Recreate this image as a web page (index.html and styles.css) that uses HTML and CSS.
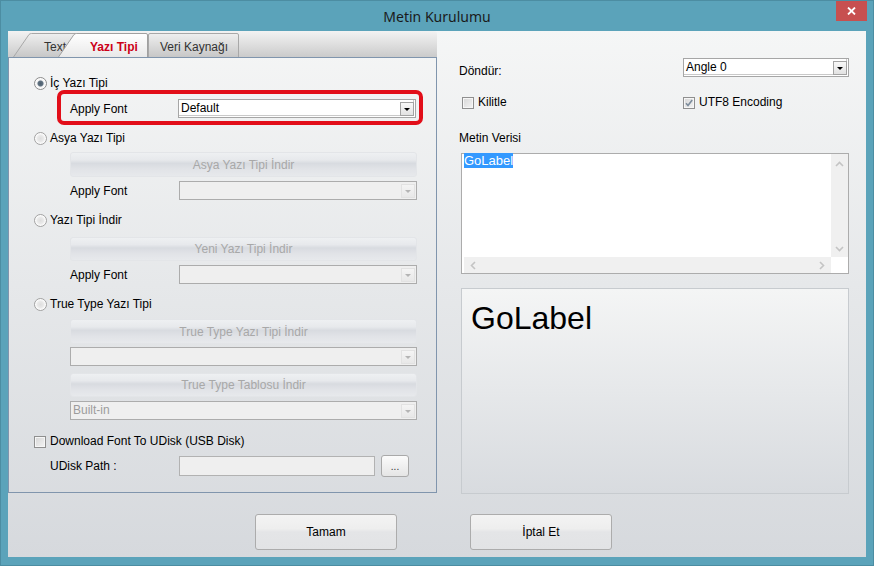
FILE: index.html
```html
<!DOCTYPE html>
<html lang="tr">
<head>
    <meta charset="UTF-8">
    <title>Metin Kurulumu</title>
    <link rel="stylesheet" href="styles.css">
</head>
<body>
    <div class="window">
        <div class="titlebar">
            <span class="title">Metin Kurulumu</span>
            <button class="close">
                <svg width="9" height="8" viewBox="0 0 9 8"><path d="M1 0.5 L8 7.5 M8 0.5 L1 7.5" stroke="#fff" stroke-width="1.8"/></svg>
            </button>
        </div>

        <div class="client">
            <div class="main">
                <!-- sol taraf: sekmeler ve yazı tipi paneli -->
                <div class="left">
                    <div class="tabstrip">
                        <div class="tab tab-text">
                            <svg class="tab-bg" width="64" height="24" viewBox="0 0 64 24">
                                <defs>
                                    <linearGradient id="gGray" x1="0" y1="0" x2="0" y2="1">
                                        <stop offset="0" stop-color="#efefef"/>
                                        <stop offset="1" stop-color="#c7c7c7"/>
                                    </linearGradient>
                                    <linearGradient id="gWhite" x1="0" y1="0" x2="0" y2="1">
                                        <stop offset="0" stop-color="#ffffff"/>
                                        <stop offset="1" stop-color="#e9e9e9"/>
                                    </linearGradient>
                                </defs>
                                <path d="M0.5 24 L16 1.5 Q17 0.5 18.5 0.5 L64 0.5 L64 24" fill="url(#gGray)" stroke="#a8a8a8"/>
                            </svg>
                            <span class="tab-label">Text</span>
                        </div>
                        <div class="tab tab-active">
                            <svg class="tab-bg" width="90" height="24" viewBox="0 0 90 24">
                                <path d="M0.5 24 L16 1.5 Q17 0.5 18.5 0.5 L88 0.5 Q89.5 0.5 89.5 2 L89.5 24" fill="url(#gWhite)" stroke="#a0a0a0"/>
                            </svg>
                            <span class="tab-label">Yazı Tipi</span>
                        </div>
                        <div class="tab tab-data">
                            <svg class="tab-bg" width="91" height="24" viewBox="0 0 91 24">
                                <path d="M0.5 24 L0.5 2 Q0.5 0.5 2 0.5 L89 0.5 Q90.5 0.5 90.5 2 L90.5 24" fill="url(#gGray)" stroke="#a8a8a8"/>
                            </svg>
                            <span class="tab-label">Veri Kaynağı</span>
                        </div>
                    </div>

                    <div class="panel">
                        <div class="radio-row r1"><span class="radio on"></span>İç Yazı Tipi</div>
                        <div class="mark">
                            <div class="field-row">
                                <span class="field-label">Apply Font</span>
                                <div class="select">
                                    <span class="select-text">Default</span>
                                    <span class="drop"></span>
                                </div>
                            </div>
                        </div>

                        <div class="radio-row r2"><span class="radio"></span>Asya Yazı Tipi</div>
                        <div class="dl-btn b1">Asya Yazı Tipi İndir</div>
                        <div class="field-row sub f1">
                            <span class="field-label">Apply Font</span>
                            <div class="select off"><span class="select-text"></span><span class="drop"></span></div>
                        </div>

                        <div class="radio-row r3"><span class="radio"></span>Yazı Tipi İndir</div>
                        <div class="dl-btn b2">Yeni Yazı Tipi İndir</div>
                        <div class="field-row sub f2">
                            <span class="field-label">Apply Font</span>
                            <div class="select off"><span class="select-text"></span><span class="drop"></span></div>
                        </div>

                        <div class="radio-row r4"><span class="radio"></span>True Type Yazı Tipi</div>
                        <div class="dl-btn b3">True Type Yazı Tipi İndir</div>
                        <div class="select off wide s1"><span class="select-text"></span><span class="drop"></span></div>
                        <div class="dl-btn b4">True Type Tablosu İndir</div>
                        <div class="select off wide s2"><span class="select-text">Built-in</span><span class="drop"></span></div>

                        <div class="check-row c1"><span class="check"></span>Download Font To UDisk (USB Disk)</div>
                        <div class="path-row">
                            <span class="path-label">UDisk Path :</span>
                            <div class="path-input"></div>
                            <div class="dots">...</div>
                        </div>
                    </div>
                </div>

                <!-- sağ taraf: döndürme, metin verisi, önizleme -->
                <div class="right">
                    <div class="rot-row">
                        <span class="rot-label">Döndür:</span>
                        <div class="select rot">
                            <span class="select-text">Angle 0</span>
                            <span class="drop"></span>
                        </div>
                    </div>
                    <div class="opt-row">
                        <div class="check-row opt"><span class="check"></span>Kilitle</div>
                        <div class="check-row"><span class="check on">
                            <svg width="10" height="10" viewBox="0 0 10 10"><path d="M2 5.2 L4 7.5 L8.2 2" fill="none" stroke="#7c8c9c" stroke-width="1.6"/></svg>
                        </span>UTF8 Encoding</div>
                    </div>
                    <div class="data-label">Metin Verisi</div>
                    <div class="memo">
                        <div class="memo-text"><span class="sel">GoLabel</span></div>
                        <div class="vscroll">
                            <svg width="9" height="6" viewBox="0 0 9 6"><path d="M1 5 L4.5 1.5 L8 5" fill="none" stroke="#c4c4c4" stroke-width="1.6"/></svg>
                            <svg width="9" height="6" viewBox="0 0 9 6"><path d="M1 1 L4.5 4.5 L8 1" fill="none" stroke="#c4c4c4" stroke-width="1.6"/></svg>
                        </div>
                        <div class="hscroll">
                            <svg width="6" height="9" viewBox="0 0 6 9"><path d="M5 1 L1.5 4.5 L5 8" fill="none" stroke="#c4c4c4" stroke-width="1.6"/></svg>
                            <svg width="6" height="9" viewBox="0 0 6 9"><path d="M1 1 L4.5 4.5 L1 8" fill="none" stroke="#c4c4c4" stroke-width="1.6"/></svg>
                        </div>
                        <div class="corner"></div>
                    </div>
                    <div class="preview">GoLabel</div>
                </div>
            </div>

            <div class="actions">
                <button class="btn">Tamam</button>
                <button class="btn">İptal Et</button>
            </div>
        </div>
    </div>
</body>
</html>
```

FILE: styles.css
```css
* {
    margin: 0;
    padding: 0;
    box-sizing: border-box;
}

body {
    font-family: "Liberation Sans", Arial, sans-serif;
    font-size: 12px;
    color: #000;
    background: #5ba3ba;
}

.window {
    width: 874px;
    height: 566px;
    background: #5ba3ba;
    border: 1px solid #4c8da2;
    padding: 0 7px 8px;
    display: flex;
    flex-direction: column;
}

/* başlık çubuğu */
.titlebar {
    position: relative;
    height: 30px;
    display: flex;
    justify-content: center;
    align-items: center;
}

.title {
    font-family: "Noto Sans", "Open Sans", sans-serif;
    font-size: 14px;
    color: #1a1a1a;
    padding-top: 1px;
}

.close {
    position: absolute;
    top: 0;
    right: -1px;
    width: 31px;
    height: 20px;
    border: none;
    background: #c75050;
    display: flex;
    align-items: center;
    justify-content: center;
}

.client {
    height: 526px;
    background: linear-gradient(#f5f6f6, #d6d9dd);
    display: flex;
    flex-direction: column;
}

.main {
    display: flex;
    height: 462px;
}

.left {
    width: 429px;
}

/* sekmeler */
.tabstrip {
    height: 26px;
    background: linear-gradient(#f3f3f3, #cbcbcb);
    display: flex;
    align-items: flex-end;
    padding-left: 5px;
    border-top-right-radius: 3px;
}

.tab {
    position: relative;
    height: 24px;
}

.tab-bg {
    position: absolute;
    left: 0;
    top: 0;
}

.tab-label {
    position: relative;
    display: block;
    padding-top: 7px;
    font-size: 12px;
    color: #333;
}

.tab-text {
    width: 64px;
    padding-left: 31px;
}

.tab-active {
    width: 90px;
    margin-left: -19px;
    padding-left: 32px;
}

.tab-active .tab-label {
    color: #cc0018;
    font-weight: bold;
}

.tab-data {
    width: 91px;
    padding-left: 12px;
}

.panel {
    height: 436px;
    border: 1px solid #8095ad;
}

/* radyo ve onay kutuları */
.radio-row,
.check-row {
    display: flex;
    align-items: center;
    height: 13px;
    line-height: 13px;
    white-space: nowrap;
}

.radio-row {
    margin-left: 25px;
}

.radio {
    width: 13px;
    height: 13px;
    border-radius: 50%;
    border: 1px solid #a2a2a2;
    background: radial-gradient(circle, #dedede 0, #e9e9e9 3px, #fbfbfb 5px);
    margin-right: 3px;
    flex: none;
}

.radio.on {
    border-color: #8c8c8c;
    background: radial-gradient(circle, #4e5f6d 0, #5f7180 2.5px, #f2f2f2 3.5px, #fdfdfd 5px);
}

.check {
    width: 12px;
    height: 12px;
    border: 1px solid #8f8f8f;
    background: linear-gradient(135deg, #d6d6d6, #f4f4f4);
    box-shadow: inset 0 0 0 1px #f6f6f6;
    margin-right: 4px;
    flex: none;
    display: flex;
    align-items: center;
    justify-content: center;
}

.r1 { margin-top: 19px; }
.r2 { margin-top: 7px; }
.r3 { margin-top: 14px; }
.r4 { margin-top: 14px; }

/* kırmızı işaretleme */
.mark {
    margin-left: 48px;
    width: 366px;
    height: 35px;
    border: 4px solid #e20e19;
    border-radius: 7px;
    padding: 5px 3px 0 9px;
}

.field-row {
    display: flex;
    align-items: center;
    height: 19px;
}

.field-label {
    width: 108px;
    flex: none;
}

.sub {
    margin-left: 61px;
}

.sub .field-label {
    width: 109px;
}

.f1 { margin-top: 4px; }
.f2 { margin-top: 4px; }

.select {
    width: 238px;
    height: 19px;
    border: 1px solid #a6a6a6;
    background: #fff;
    display: flex;
    align-items: center;
    justify-content: space-between;
    padding: 0 1px 0 2px;
    box-shadow: inset -1px -1px 0 #fff, inset -2px -2px 0 #c9c9c9;
}

.select-text {
    line-height: 15px;
}

.drop {
    width: 14px;
    height: 14px;
    border: 1px solid #a3a3a3;
    background: linear-gradient(#f8f8f8, #e2e2e2);
    display: flex;
    align-items: center;
    justify-content: center;
}

.drop::after {
    content: "";
    border-top: 3px solid #000;
    border-left: 3px solid transparent;
    border-right: 3px solid transparent;
    margin-top: 1px;
}

.select.off {
    background: #efefef;
    border-color: #acacac;
    box-shadow: none;
    color: #9c9c9c;
}

.select.off .drop {
    border-color: #e2e2e2;
    background: linear-gradient(#f4f4f4, #e8e8e8);
}

.select.off .drop::after {
    border-top-color: #b4b4b4;
}

.select.wide {
    width: 347px;
    margin-left: 61px;
}

.s1 { margin-top: 3px; }
.s2 { margin-top: 4px; }

/* devre dışı indirme düğmeleri */
.dl-btn {
    margin-left: 61px;
    width: 347px;
    border-radius: 3px;
    border: 1px solid #e3e5e8;
    background: linear-gradient(#eef0f2 0%, #e7e9ec 30%, #d8dbe0 45%, #e1e3e7 70%, #e7e9ec 100%);
    color: #a8a8a8;
    text-align: center;
    display: flex;
    align-items: center;
    justify-content: center;
}

.b1 { margin-top: 7px; height: 25px; }
.b2 { margin-top: 10px; height: 24px; }
.b3 { margin-top: 8px; height: 25px; }
.b4 { margin-top: 7px; height: 24px; }

.c1 {
    margin-top: 15px;
    margin-left: 25px;
}

.path-row {
    display: flex;
    align-items: center;
    height: 22px;
    margin-top: 7px;
    margin-left: 41px;
}

.path-label {
    width: 129px;
}

.path-input {
    width: 196px;
    height: 20px;
    border: 1px solid #b2b2b2;
    background: #efefef;
}

.dots {
    width: 28px;
    height: 22px;
    margin-left: 6px;
    border: 1px solid #a9a9a9;
    border-radius: 3px;
    background: linear-gradient(#fbfbfb, #e5e5e5);
    font-size: 10px;
    text-align: center;
    line-height: 22px;
    color: #333;
}

/* sağ sütun */
.right {
    width: 390px;
    margin-left: 22px;
    padding-top: 27px;
}

.rot-row {
    display: flex;
    justify-content: space-between;
    height: 19px;
}

.rot-label {
    padding-top: 6px;
}

.select.rot {
    width: 166px;
}

.opt-row {
    display: flex;
    margin-top: 19px;
}

.opt {
    width: 221px;
    margin-left: 3px;
}

.data-label {
    margin-top: 22px;
    line-height: 14px;
}

.memo {
    margin-top: 8px;
    margin-left: 2px;
    width: 388px;
    height: 121px;
    border: 1px solid #acacac;
    background: #fff;
    display: grid;
    grid-template-columns: 1fr 17px;
    grid-template-rows: 1fr 16px;
}

.memo-text {
    padding-left: 2px;
    font-size: 13px;
    line-height: 14px;
}

.sel {
    background: #3399ff;
    color: #fff;
}

.vscroll {
    background: #f0f0f0;
    display: flex;
    flex-direction: column;
    justify-content: space-between;
    align-items: center;
    padding: 7px 0 5px;
}

.hscroll {
    margin-left: 2px;
    background: #f0f0f0;
    display: flex;
    justify-content: space-between;
    align-items: center;
    padding: 0 6px;
}

.corner {
    background: #fff;
}

.preview {
    margin-top: 14px;
    margin-left: 2px;
    width: 388px;
    height: 206px;
    border: 1px solid #c7cbcf;
    background: linear-gradient(#f4f5f5, #d8dbdf);
    font-size: 32px;
    line-height: 32px;
    padding: 13px 0 0 9px;
}

/* alt düğmeler */
.actions {
    display: flex;
    padding: 21px 0 0 247px;
    gap: 73px;
}

.btn {
    width: 142px;
    height: 36px;
    border: 1px solid #acacac;
    border-radius: 3px;
    background: linear-gradient(#f3f3f3 0%, #eeeeee 40%, #e4e5e7 50%, #e2e3e5 100%);
    font-family: "Liberation Sans", Arial, sans-serif;
    font-size: 12px;
    color: #000;
}
```
